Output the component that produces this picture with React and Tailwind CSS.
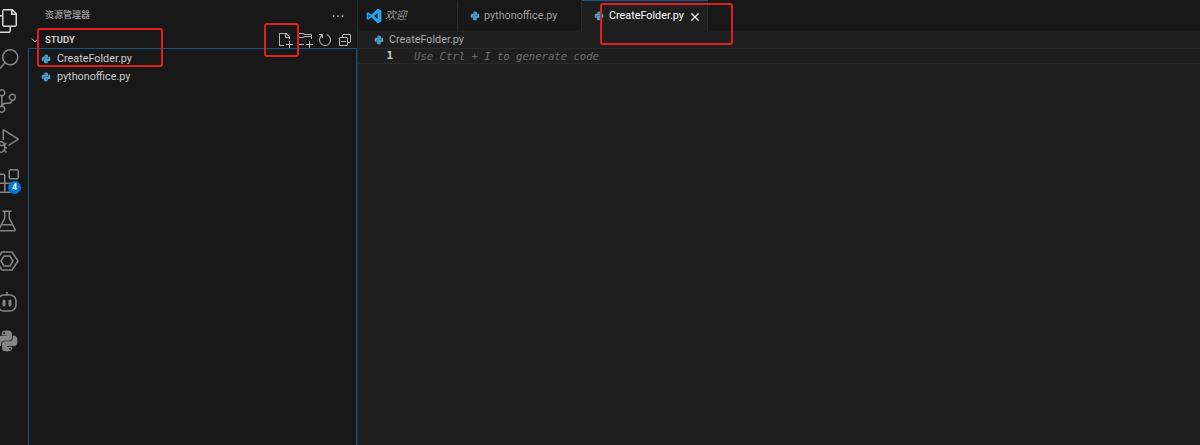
import React from "react";
import { VscFiles, VscSearch, VscSourceControl, VscDebugAlt, VscExtensions, VscBeaker, VscNewFile, VscNewFolder, VscRefresh, VscCollapseAll, VscEllipsis, VscChevronDown, VscClose } from "react-icons/vsc";
import { FaPython } from "react-icons/fa";

const ui = { fontFamily: 'Roboto,"Noto Sans CJK SC",sans-serif' };
const mono = { fontFamily: '"DejaVu Sans Mono",monospace' };

function Py({ className = "" }) {
  return <FaPython className={"text-[#4d9ec9] shrink-0 " + className} />;
}

function VsLogo() {
  return (
    <svg width="16" height="16" viewBox="0 0 24 24" className="shrink-0">
      <path fill="#23a9f2" d="M17.5 1 23 3.6v16.8L17.5 23 8 13.9 3.3 17.6 1 16.4V7.6l2.3-1.2L8 10.1 17.5 1zM3.4 9.4v5.2L6 12 3.4 9.4zM17.5 7.2 12 12l5.5 4.8V7.2z" />
    </svg>
  );
}

function Hex() {
  return (
    <svg width="24" height="24" viewBox="0 0 24 24" fill="none" stroke="#858585" strokeWidth="1.6">
      <path d="M7 3h10l6 9-6 9H7l-6-9 6-9z" />
      <path d="M9 7h6l3 5-3 5H9l-3-5 3-5z" />
    </svg>
  );
}

function Bot() {
  return (
    <svg width="24" height="24" viewBox="0 0 24 24" fill="none" stroke="#858585" strokeWidth="1.6">
      <path d="M12 3v3" />
      <rect x="3" y="6" width="18" height="16" rx="6" />
      <rect x="7.5" y="10.5" width="3" height="7" rx="1.5" fill="#858585" stroke="none" />
      <rect x="13.5" y="10.5" width="3" height="7" rx="1.5" fill="#858585" stroke="none" />
    </svg>
  );
}

function Slot({ children }) {
  return <div className="relative flex h-[40px] w-[28px] items-center justify-end pr-[9px] pt-[2px]">{children}</div>;
}

export default function App() {
  return (
    <div className="relative flex h-[445px] w-[1200px] overflow-hidden bg-[#1f1f1f] text-[#cccccc]" style={ui}>
      <div className="flex w-[28px] shrink-0 flex-col overflow-hidden bg-[#181818] text-[#858585]">
        <Slot><VscFiles className="shrink-0 text-[24px] text-[#d7d7d7]" /></Slot>
        <Slot><VscSearch className="shrink-0 text-[24px]" /></Slot>
        <Slot><VscSourceControl className="shrink-0 text-[24px]" /></Slot>
        <Slot><VscDebugAlt className="shrink-0 text-[24px]" /></Slot>
        <Slot>
          <VscExtensions className="shrink-0 text-[24px]" />
          <span className="absolute right-[7px] top-[21px] flex h-[13px] w-[13px] items-center justify-center rounded-full bg-[#0078d4] text-[9px] font-semibold leading-none text-white">4</span>
        </Slot>
        <Slot><VscBeaker className="shrink-0 text-[24px]" /></Slot>
        <Slot><span className="shrink-0"><Hex /></span></Slot>
        <Slot><span className="shrink-0"><Bot /></span></Slot>
        <Slot><FaPython className="shrink-0 text-[24px]" /></Slot>
      </div>

      <div className="flex w-[330px] shrink-0 flex-col border-r border-[#2b2b2b] bg-[#181818]">
        <div className="flex h-[31px] items-center justify-between pl-[17px] pr-[12px] pt-[1px]">
          <span className="text-[9px] text-[#bbbbbb]">资源管理器</span>
          <VscEllipsis className="text-[14px]" />
        </div>
        <div className="flex h-[17px] items-center justify-between pr-[4px] pt-[1px]">
          <div className="relative flex items-center pl-[17px]">
            <VscChevronDown className="absolute left-[1px] text-[12px]" />
            <span className="text-[9.5px] font-bold">STUDY</span>
          </div>
          <div className="flex items-center gap-[4px] text-[#b5b5b5]">
            <VscNewFile className="text-[16px]" />
            <VscNewFolder className="text-[16px]" />
            <VscRefresh className="text-[16px]" />
            <VscCollapseAll className="text-[16px]" />
          </div>
        </div>
        <div className="flex-1 border border-b-0 border-[#14568a] pt-[1px]">
          <div className="flex h-[18px] items-center gap-[5px] pl-[12px] text-[10.8px]"><Py className="text-[10px]" /><span className="ml-[1px]">CreateFolder.py</span></div>
          <div className="flex h-[18px] items-center gap-[5px] pl-[12px] text-[10.8px]"><Py className="text-[10px]" /><span className="ml-[1px]">pythonoffice.py</span></div>
        </div>
      </div>

      <div className="flex min-w-0 flex-1 flex-col">
        <div className="flex h-[31px] shrink-0 bg-[#181818] pt-[1px] text-[10.8px]">
          <div className="flex w-[100px] items-center border-r border-[#2b2b2b] pl-[8px]">
            <VsLogo /><span className="ml-[3px] italic text-[#9d9d9d]">欢迎</span>
          </div>
          <div className="flex w-[124px] items-center gap-[4px] border-r border-[#2b2b2b] pl-[12px] text-[#9d9d9d]">
            <Py className="text-[10px]" />pythonoffice.py
          </div>
          <div className="-mt-[1px] flex w-[126px] items-center border-r border-t border-[#2b2b2b] border-t-[#14568a] bg-[#1f1f1f] pl-[12px] pt-[1px] text-white">
            <Py className="mr-[5px] -translate-y-[1px] text-[10px]" />CreateFolder.py
            <VscClose className="ml-[4px] stroke-[0.6px] text-[14px]" />
          </div>
        </div>
        <div className="flex h-[17px] shrink-0 items-center gap-[5px] pl-[16px] pt-[1px] text-[10.8px] text-[#a9a9a9]">
          <Py className="text-[10px]" />CreateFolder.py
        </div>
        <div className="flex h-[16px] shrink-0 items-center border-y border-[#2a2a2a] pt-[1px]" style={mono}>
          <span className="w-[56px] shrink-0 pr-[21px] text-right text-[11px] font-semibold text-[#cccccc]">1</span>
          <span className="text-[10.6px] italic text-[#6e6e6e]">Use Ctrl + I to generate code</span>
        </div>
      </div>

      <div className="absolute left-[37px] top-[28px] h-[39px] w-[126px] rounded-[3px] border-2 border-[#e0201c]" />
      <div className="absolute left-[264px] top-[23px] h-[34px] w-[35px] rounded-[3px] border-2 border-[#e0201c]" />
      <div className="absolute left-[600px] top-[3px] h-[42px] w-[133px] rounded-[3px] border-2 border-[#e0201c]" />
    </div>
  );
}
